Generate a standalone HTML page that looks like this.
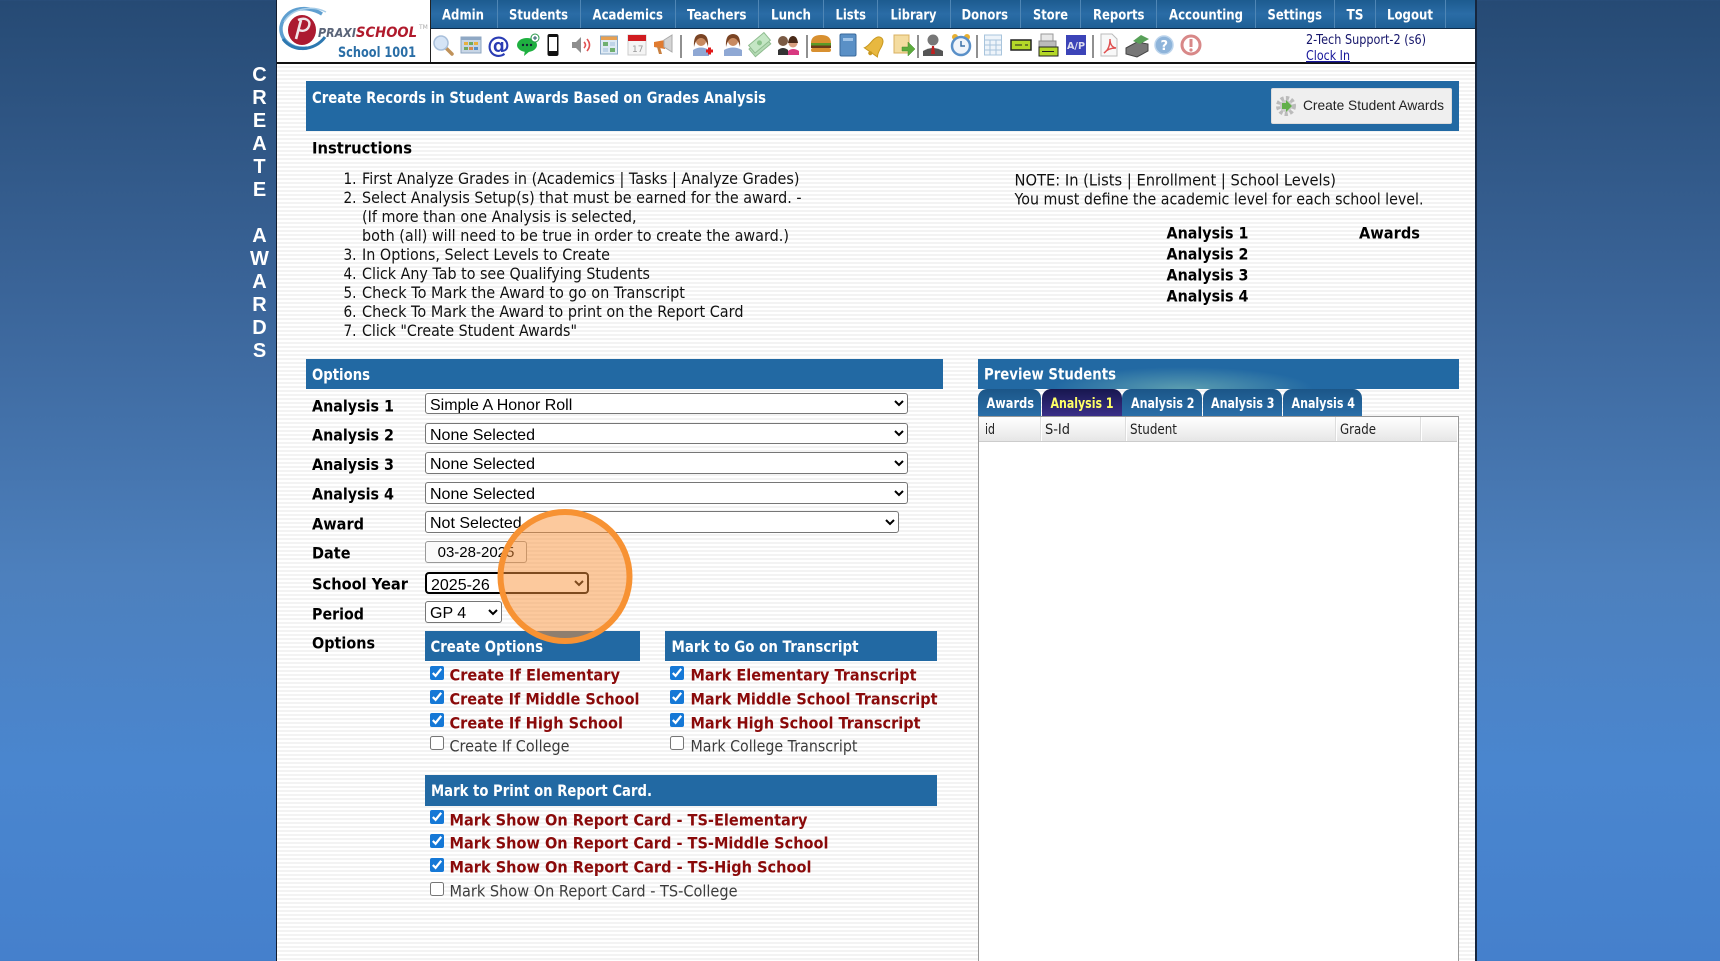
<!DOCTYPE html>
<html lang="en"><head><meta charset="utf-8"><title>Create Student Awards</title>
<style>
html,body{margin:0;padding:0;width:1720px;height:961px;overflow:hidden}
body{position:relative;background:linear-gradient(180deg,#264a74 0%,#3a6498 30%,#4d80bd 60%,#4a86cf 80%,#4580cc 100%);font-family:"Liberation Sans",sans-serif}
.a{position:absolute}
#panel{left:276px;top:0;width:1198px;height:961px;border-left:1px solid #111c2e;border-right:2px solid #16263e;background:repeating-linear-gradient(180deg,#fff 0 2px,#f3f3f3 2px 4px)}
#head{left:277px;top:0;width:1198px;height:62px;background:#fff;border-bottom:2px solid #111}
#nav{left:431px;top:0;width:1044px;height:28px;background:linear-gradient(180deg,#1c5b8f,#2a6ca6 50%,#1e5f95);border-bottom:1px solid #0e2c4a}
#logoSep{left:430px;top:0;width:1px;height:62px;background:#222}
.sep{position:absolute;top:0;width:1px;height:28px;background:#4f86b5}
.bar{position:absolute;background:#2269a3}
.tab{position:absolute;top:389px;height:27px;border-radius:9px 9px 0 0;background:linear-gradient(180deg,#1b5688,#2a6ea8);box-sizing:border-box}
select,input[type=text]{position:absolute;box-sizing:border-box;margin:0;font:16px "Liberation Sans",sans-serif;color:#000;background:#fff;border:1px solid #767676;border-radius:3px;padding:2px 0 0 0}
input[type=text]{padding:1px 0 0 0}
input[type=checkbox]{position:absolute;margin:0;width:14px;height:14px;accent-color:#1578d6}
#btn{left:1271px;top:88px;width:181px;height:36px;background:#efefef;border:1px solid #ddd;border-radius:2px;box-sizing:border-box}
#grid{left:978px;top:416px;width:481px;height:560px;background:#fff;border:1px solid #999;box-sizing:border-box}
#ghead{left:979px;top:417px;width:478px;height:25px;background:linear-gradient(180deg,#fff,#e6e6e6);border-bottom:1px solid #ccc;box-sizing:border-box}
.gs{position:absolute;top:417px;width:1px;height:24px;background:#fff;border-left:1px solid #ddd}
svg{position:absolute;left:0;top:0}
text{font-family:"DejaVu Sans","Liberation Sans",sans-serif}
.n{font-size:16px;fill:#111}
.b{font-size:16px;font-weight:700;fill:#000}
.w{font-size:16px;font-weight:700;fill:#fff}
.nv{font-size:14px;font-weight:700;fill:#fff}
.r{font-size:16px;font-weight:700;fill:#8a0a0a}
.g{font-size:16px;fill:#3c3c3c}
.t{font-size:14px;font-weight:700;fill:#fff}
.h{font-size:14px;fill:#222}
.side{font-family:"Liberation Sans",sans-serif;font-size:20px;font-weight:700;fill:#fff;text-anchor:middle}
</style></head><body>
<div class="a" id="panel"></div>
<div class="a" id="head"></div>
<div class="a" id="nav"></div>
<div class="a" id="logoSep"></div>
<div class="sep" style="left:497px"></div><div class="sep" style="left:580px"></div><div class="sep" style="left:675px"></div><div class="sep" style="left:758px"></div><div class="sep" style="left:823px"></div><div class="sep" style="left:877px"></div><div class="sep" style="left:950px"></div><div class="sep" style="left:1020px"></div><div class="sep" style="left:1080px"></div><div class="sep" style="left:1156px"></div><div class="sep" style="left:1255px"></div><div class="sep" style="left:1334px"></div><div class="sep" style="left:1375px"></div><div class="sep" style="left:1445px"></div>

<div class="bar" style="left:306px;top:81px;width:1153px;height:50px"></div>
<div class="a" id="btn"></div>
<div class="bar" style="left:306px;top:359px;width:637px;height:30px"></div>
<div class="bar" style="left:978px;top:359px;width:481px;height:30px;background:radial-gradient(ellipse 130px 22px at 205px 100%,#5c9eb0 0%,rgba(34,105,163,0) 100%),#2269a3"></div>
<div class="bar" style="left:425px;top:631px;width:215px;height:30px"></div>
<div class="bar" style="left:665px;top:631px;width:272px;height:30px"></div>
<div class="bar" style="left:425px;top:775px;width:512px;height:31px"></div>

<div class="tab" style="left:978px;width:63px"></div>
<div class="tab" style="left:1042px;width:80px;background:linear-gradient(180deg,#17174f,#3a2f88)"></div>
<div class="tab" style="left:1122px;width:80px"></div>
<div class="tab" style="left:1203px;width:79px"></div>
<div class="tab" style="left:1283px;width:79px"></div>
<div class="a" id="grid"></div>
<div class="a" id="ghead"></div>
<div class="gs" style="left:1040px"></div><div class="gs" style="left:1125px"></div><div class="gs" style="left:1335px"></div><div class="gs" style="left:1420px"></div>

<select style="left:425px;top:393px;width:483px;height:21px"><option>Simple A Honor Roll</option></select>
<select style="left:425px;top:423px;width:483px;height:21px"><option>None Selected</option></select>
<select style="left:425px;top:452px;width:483px;height:22px"><option>None Selected</option></select>
<select style="left:425px;top:482px;width:483px;height:22px"><option>None Selected</option></select>
<select style="left:425px;top:511px;width:474px;height:22px"><option>Not Selected</option></select>
<input type="text" value="03-28-2025" style="left:425px;top:541px;width:102px;height:22px;font-size:15px;text-align:center;background:#fafafa;border-color:#999">
<select style="left:425px;top:572px;width:164px;height:22px;border:2px solid #000;border-radius:4px"><option>2025-26</option></select>
<select style="left:425px;top:601px;width:77px;height:22px"><option>GP 4</option></select>

<input type="checkbox" checked style="left:430px;top:666px"><input type="checkbox" checked style="left:430px;top:690px"><input type="checkbox" checked style="left:430px;top:713px"><input type="checkbox" style="left:430px;top:736px">
<input type="checkbox" checked style="left:670px;top:666px"><input type="checkbox" checked style="left:670px;top:690px"><input type="checkbox" checked style="left:670px;top:713px"><input type="checkbox" style="left:670px;top:736px">
<input type="checkbox" checked style="left:430px;top:810px"><input type="checkbox" checked style="left:430px;top:834px"><input type="checkbox" checked style="left:430px;top:858px"><input type="checkbox" style="left:430px;top:882px">

<svg width="1720" height="961" viewBox="0 0 1720 961">
<!-- side letters -->
<text class="side" x="259.5" y="81">C</text><text class="side" x="259.5" y="104">R</text><text class="side" x="259.5" y="127">E</text><text class="side" x="259.5" y="150">A</text><text class="side" x="259.5" y="173">T</text><text class="side" x="259.5" y="196">E</text><text class="side" x="259.5" y="242">A</text><text class="side" x="259.5" y="265">W</text><text class="side" x="259.5" y="288">A</text><text class="side" x="259.5" y="311">R</text><text class="side" x="259.5" y="334">D</text><text class="side" x="259.5" y="357">S</text>

<!-- logo -->
<g fill="none">
<path d="M322 14C306 4 284 8 281 27c-1 14 12 23 26 21" stroke="#5f9fd0" stroke-width="3.5"/>
<path d="M283 39c10 14 32 12 42 -2" stroke="#2d78b0" stroke-width="3"/>
<path d="M326 12C312 5 292 8 284 22" stroke="#a8cde8" stroke-width="1.5"/>
</g>
<ellipse cx="302" cy="30" rx="14" ry="15" fill="#ac1a30"/>
<path d="M298 20c7-3 13 0 11 6s-8 5-10 4" fill="none" stroke="#f0e6ea" stroke-width="2.4"/>
<path d="M301 20l-5 19" stroke="#f0e6ea" stroke-width="2.6"/>
<text x="318" y="37" textLength="38" lengthAdjust="spacingAndGlyphs" style="font-size:12px;font-weight:700;font-style:italic;fill:#5a6478">PRAXI</text>
<text x="356" y="37" textLength="61" lengthAdjust="spacingAndGlyphs" style="font-size:14px;font-weight:700;font-style:italic;fill:#b01a2c">SCHOOL</text>
<text x="419" y="29" style="font-size:6px;fill:#aaa">TM</text>
<text x="338" y="57" textLength="78" lengthAdjust="spacingAndGlyphs" style="font-size:14px;font-weight:700;fill:#2a6ea6">School 1001</text>

<!-- nav -->
<text class="nv" x="442" y="19.5" textLength="42" lengthAdjust="spacingAndGlyphs">Admin</text>
<text class="nv" x="509" y="19.5" textLength="59" lengthAdjust="spacingAndGlyphs">Students</text>
<text class="nv" x="592.5" y="19.5" textLength="70.5" lengthAdjust="spacingAndGlyphs">Academics</text>
<text class="nv" x="687" y="19.5" textLength="59.5" lengthAdjust="spacingAndGlyphs">Teachers</text>
<text class="nv" x="771" y="19.5" textLength="40" lengthAdjust="spacingAndGlyphs">Lunch</text>
<text class="nv" x="835.5" y="19.5" textLength="30.5" lengthAdjust="spacingAndGlyphs">Lists</text>
<text class="nv" x="890.5" y="19.5" textLength="46" lengthAdjust="spacingAndGlyphs">Library</text>
<text class="nv" x="961.5" y="19.5" textLength="46.5" lengthAdjust="spacingAndGlyphs">Donors</text>
<text class="nv" x="1033" y="19.5" textLength="35" lengthAdjust="spacingAndGlyphs">Store</text>
<text class="nv" x="1093" y="19.5" textLength="51.5" lengthAdjust="spacingAndGlyphs">Reports</text>
<text class="nv" x="1169" y="19.5" textLength="74" lengthAdjust="spacingAndGlyphs">Accounting</text>
<text class="nv" x="1267.5" y="19.5" textLength="54.5" lengthAdjust="spacingAndGlyphs">Settings</text>
<text class="nv" x="1346.5" y="19.5" textLength="17" lengthAdjust="spacingAndGlyphs">TS</text>
<text class="nv" x="1387" y="19.5" textLength="46" lengthAdjust="spacingAndGlyphs">Logout</text>

<!-- toolbar icons -->
<g transform="translate(443,45)"><line x1="3" y1="3" x2="9" y2="9" stroke="#c0925a" stroke-width="3.5" stroke-linecap="round"/><circle cx="-2" cy="-2" r="7" fill="#d5e4f6" stroke="#a8bfda" stroke-width="1.5"/></g>
<g transform="translate(471,45)"><rect x="-10" y="-8" width="20" height="16" fill="#c8d6e6" stroke="#8ea6c0"/><rect x="-10" y="-8" width="20" height="3" fill="#8fa8c4"/><rect x="-7" y="-3" width="4" height="3" fill="#e8b040"/><rect x="-2" y="-3" width="4" height="3" fill="#70a860"/><rect x="3" y="-3" width="4" height="3" fill="#e8b040"/><rect x="-7" y="2" width="4" height="3" fill="#70a860"/><rect x="-2" y="2" width="4" height="3" fill="#d88a50"/><rect x="3" y="2" width="4" height="3" fill="#5a90c8"/></g>
<text x="487" y="53" textLength="23" lengthAdjust="spacingAndGlyphs" style="font-size:23px;font-weight:700;fill:#2a3cb4">@</text>
<g transform="translate(528,45)"><ellipse cx="-1" cy="0" rx="10" ry="7" fill="#1fb040"/><path d="M-3 5l-1 6 6-5z" fill="#1fb040"/><circle cx="-5" cy="0" r="1.2" fill="#123"/><circle cx="-1" cy="0" r="1.2" fill="#123"/><circle cx="3" cy="0" r="1.2" fill="#123"/><circle cx="7" cy="-7" r="4" fill="#fff" stroke="#2a9a4a"/><path d="M5 -7h4M7 -9v4" stroke="#256" stroke-width="1"/></g>
<g transform="translate(553,45)"><rect x="-5.5" y="-11" width="11" height="22" rx="2" fill="#111"/><rect x="-4" y="-8" width="8" height="14" fill="#fff"/></g>
<g transform="translate(582,45)"><path d="M-10 -3h4l5-5v16l-5-5h-4z" fill="#8e8e8e"/><path d="M2 -3q3 3 0 6M5 -6q5 6 0 12" fill="none" stroke="#e05050" stroke-width="1.6"/></g>
<g transform="translate(609,45)"><rect x="-8.5" y="-9" width="17" height="18" fill="#dfeaf4" stroke="#8aa8c6"/><rect x="-8" y="-8.5" width="16" height="3.5" fill="#e8a050"/><rect x="-6" y="-3" width="5" height="4" fill="#70b070"/><rect x="1" y="-3" width="5" height="4" fill="#c0d4e8"/><rect x="-6" y="3" width="5" height="4" fill="#c0d4e8"/><rect x="1" y="3" width="5" height="4" fill="#70b070"/></g>
<g transform="translate(637,45)"><rect x="-9" y="-10" width="18" height="20" fill="#f4f4f4" stroke="#ccc"/><rect x="-9" y="-10" width="18" height="6" fill="#d01c20"/><text x="-5" y="7" style="font-size:9px;fill:#999">17</text></g>
<g transform="translate(663,45)"><path d="M-9 -3l11 -2v9l-11 -2z" fill="#e07b30"/><path d="M1 -5l8 -5v17l-8 -5z" fill="#d5d5d5" stroke="#aaa"/><path d="M-6 2l2 7h3l-2-7z" fill="#c88040"/></g>
<line x1="681" y1="35" x2="681" y2="58" stroke="#222"/>
<g transform="translate(702,45)"><path d="M-9 11v-6q8-5 16 0v6z" fill="#8fa8d4"/><circle cx="-1" cy="-4" r="5" fill="#c88a60"/><path d="M-8 2q-1-13 7-13t7 13q-2-9-7-9t-7 9z" fill="#7a4424"/><path d="M4 6h7M7.5 2.500v7" stroke="#e01818" stroke-width="3"/></g>
<g transform="translate(733,45)"><path d="M-9 11v-6q9-5 18 0v6z" fill="#8fa8d4"/><circle cx="0" cy="-4" r="5" fill="#c88a60"/><path d="M-7 2q-1-13 7-13t7 13q-2-9-7-9t-7 9z" fill="#7a4424"/></g>
<g transform="translate(760,45) rotate(-40)"><rect x="-11" y="-4" width="20" height="10" fill="#b6dcb6" stroke="#8fbc8f"/><rect x="-9" y="-7" width="20" height="10" fill="#c4e6c4" stroke="#8fbc8f"/><circle cx="1" cy="-2" r="2.5" fill="#8cc48c"/></g>
<g transform="translate(789,45)"><path d="M-11 10v-5q5-4 10 0v5z" fill="#333"/><circle cx="-6" cy="-4" r="5" fill="#7a5a44"/><path d="M-1 10v-4q5-4 11 0v4z" fill="#d83880"/><circle cx="4" cy="-2" r="4.500" fill="#d8a080"/><path d="M-1 -2q1-7 5-7t5 7z" fill="#4a2a18"/></g>
<line x1="807" y1="35" x2="807" y2="58" stroke="#222"/>
<g transform="translate(821,45)"><path d="M-10 -2q0-8 10-8t10 8z" fill="#d89030"/><rect x="-10" y="-2" width="20" height="2.500" fill="#5a9a28"/><rect x="-10" y="0.500" width="20" height="2.500" fill="#6a3a18"/><rect x="-10" y="3" width="20" height="4" rx="2" fill="#d89030"/></g>
<g transform="translate(848,45)"><rect x="-8" y="-11" width="16" height="22" rx="1.500" fill="#5a90c6" stroke="#3a6a9c"/><rect x="-5" y="-7" width="10" height="3" fill="#a0c4e8"/></g>
<g transform="translate(876,45) rotate(35)"><path d="M-8 9q2-3 2.500-10q1-8 5.500-8t5.500 8q.5 7 2.500 10z" fill="#e8b840" stroke="#c89820"/><circle cx="0" cy="10" r="2" fill="#c89820"/></g>
<g transform="translate(904,45)"><rect x="-10" y="-10" width="15" height="18" fill="#f4dca0" stroke="#d8b060"/><path d="M-2 2h6v-5l7 7-7 7v-5h-6z" fill="#5cab3c" stroke="#448a2c" stroke-width=".5"/></g>
<line x1="918" y1="35" x2="918" y2="58" stroke="#222"/>
<g transform="translate(933,45)"><path d="M-10 11v-5q10-6 20 0v5z" fill="#555"/><circle cx="0" cy="-5" r="5.500" fill="#777"/><path d="M-1 1h2l1 8h-4z" fill="#c02020"/></g>
<g transform="translate(961,45)"><circle cx="-6" cy="-8" r="3" fill="#e8b030"/><circle cx="6" cy="-8" r="3" fill="#e8b030"/><circle cx="0" cy="1" r="9" fill="#f0f4fa" stroke="#5a90c8" stroke-width="2.500"/><path d="M0 -4v5h4" stroke="#3a70a8" stroke-width="1.500" fill="none"/></g>
<line x1="977" y1="35" x2="977" y2="58" stroke="#222"/>
<g transform="translate(993,45)" stroke="#a8c4dc" fill="#eef4fa"><rect x="-8.500" y="-10" width="17" height="20"/><path d="M-8.500 -5h17M-8.500 0h17M-8.500 5h17M-3 -5v15M3 -5v15" fill="none"/></g>
<g transform="translate(1021,45)"><rect x="-10" y="-5" width="20" height="10" fill="#b4d828" stroke="#222" stroke-width="1.500"/><path d="M-6 0h7M4 0h3" stroke="#222"/></g>
<g transform="translate(1048,45)"><rect x="-7" y="-11" width="12" height="8" fill="#e8e8e8" stroke="#999"/><rect x="-9" y="-4" width="17" height="8" fill="#bbb" stroke="#888"/><rect x="-9" y="2" width="19" height="9" fill="#b4d828" stroke="#222"/><path d="M-6 6.500h12" stroke="#222"/></g>
<g transform="translate(1076,45)"><rect x="-10" y="-10" width="20" height="20" fill="#3c44b8"/><text x="-9" y="4" textLength="18" lengthAdjust="spacingAndGlyphs" style="font-size:10px;font-weight:700;fill:#dde">A/P</text></g>
<line x1="1093" y1="35" x2="1093" y2="58" stroke="#222"/>
<g transform="translate(1109,45)"><path d="M-8 -11h11l5 5v17h-16z" fill="#f8f8f8" stroke="#bbb"/><path d="M-5 8q6-4 6-14q0 8 6 9q-8 0-12 5z" fill="none" stroke="#e05050" stroke-width="1.400"/></g>
<g transform="translate(1137,45)"><path d="M-11 3l11-6 11 2v7l-11 6-11-3z" fill="#777" stroke="#444"/><path d="M-4 -4l8-6 8 4-9 5z" fill="#58a058"/></g>
<g transform="translate(1164,45)"><circle r="9" fill="#8eb4da" stroke="#bcd4ec" stroke-width="1.500"/><text x="-3.500" y="5" style="font-size:13px;font-weight:700;fill:#fff">?</text></g>
<g transform="translate(1191,45)"><circle r="9" fill="#fff" stroke="#d88888" stroke-width="3"/><rect x="-1.500" y="-6" width="3" height="8" fill="#d88888"/><circle cy="5" r="1.600" fill="#d88888"/></g>

<text x="1306" y="44" textLength="120" lengthAdjust="spacingAndGlyphs" style="font-size:13px;fill:#15156a">2-Tech Support-2 (s6)</text>
<text x="1306" y="60" textLength="44" lengthAdjust="spacingAndGlyphs" style="font-size:13px;fill:#15159a;text-decoration:underline">Clock In</text>

<text class="w" x="312" y="103" textLength="454" lengthAdjust="spacingAndGlyphs">Create Records in Student Awards Based on Grades Analysis</text>
<g transform="translate(1286,106)"><circle r="7.500" fill="none" stroke="#bbb" stroke-width="5" stroke-dasharray="3 2"/><circle r="6" fill="#ccc"/><path d="M-4 -3h4v-3l6 6-6 6v-3h-4z" fill="#62b04a"/></g>
<text x="1303" y="110" textLength="141" lengthAdjust="spacingAndGlyphs" style="font-family:'Liberation Sans',sans-serif;font-size:14px;fill:#222">Create Student Awards</text>

<text class="b" x="312" y="153.500" textLength="100" lengthAdjust="spacingAndGlyphs">Instructions</text>
<text class="n" x="343.500" y="184" textLength="13" lengthAdjust="spacingAndGlyphs">1.</text><text class="n" x="362" y="184" textLength="437.500" lengthAdjust="spacingAndGlyphs">First Analyze Grades in (Academics | Tasks | Analyze Grades)</text>
<text class="n" x="343.500" y="203" textLength="13" lengthAdjust="spacingAndGlyphs">2.</text><text class="n" x="362" y="203" textLength="439.500" lengthAdjust="spacingAndGlyphs">Select Analysis Setup(s) that must be earned for the award. -</text>
<text class="n" x="362" y="222" textLength="274.500" lengthAdjust="spacingAndGlyphs">(If more than one Analysis is selected,</text>
<text class="n" x="362" y="241" textLength="427" lengthAdjust="spacingAndGlyphs">both (all) will need to be true in order to create the award.)</text>
<text class="n" x="343.500" y="260" textLength="13" lengthAdjust="spacingAndGlyphs">3.</text><text class="n" x="362" y="260" textLength="248" lengthAdjust="spacingAndGlyphs">In Options, Select Levels to Create</text>
<text class="n" x="343.500" y="279" textLength="13" lengthAdjust="spacingAndGlyphs">4.</text><text class="n" x="362" y="279" textLength="288" lengthAdjust="spacingAndGlyphs">Click Any Tab to see Qualifying Students</text>
<text class="n" x="343.500" y="298" textLength="13" lengthAdjust="spacingAndGlyphs">5.</text><text class="n" x="362" y="298" textLength="323" lengthAdjust="spacingAndGlyphs">Check To Mark the Award to go on Transcript</text>
<text class="n" x="343.500" y="317" textLength="13" lengthAdjust="spacingAndGlyphs">6.</text><text class="n" x="362" y="317" textLength="381.500" lengthAdjust="spacingAndGlyphs">Check To Mark the Award to print on the Report Card</text>
<text class="n" x="343.500" y="336" textLength="13" lengthAdjust="spacingAndGlyphs">7.</text><text class="n" x="362" y="336" textLength="215" lengthAdjust="spacingAndGlyphs">Click "Create Student Awards"</text>

<text class="n" x="1014.500" y="185.500" textLength="321.500" lengthAdjust="spacingAndGlyphs">NOTE: In (Lists | Enrollment | School Levels)</text>
<text class="n" x="1014.500" y="204.500" textLength="409" lengthAdjust="spacingAndGlyphs">You must define the academic level for each school level.</text>
<text class="b" x="1166.500" y="238.500" textLength="82" lengthAdjust="spacingAndGlyphs">Analysis 1</text>
<text class="b" x="1166.500" y="259.500" textLength="82" lengthAdjust="spacingAndGlyphs">Analysis 2</text>
<text class="b" x="1166.500" y="280.500" textLength="82" lengthAdjust="spacingAndGlyphs">Analysis 3</text>
<text class="b" x="1166.500" y="301.500" textLength="82" lengthAdjust="spacingAndGlyphs">Analysis 4</text>
<text class="b" x="1359" y="238.500" textLength="61" lengthAdjust="spacingAndGlyphs">Awards</text>

<text class="w" x="312" y="380" textLength="58" lengthAdjust="spacingAndGlyphs">Options</text>
<text class="b" x="312" y="411.500" textLength="82" lengthAdjust="spacingAndGlyphs">Analysis 1</text>
<text class="b" x="312" y="440.500" textLength="82" lengthAdjust="spacingAndGlyphs">Analysis 2</text>
<text class="b" x="312" y="470" textLength="82" lengthAdjust="spacingAndGlyphs">Analysis 3</text>
<text class="b" x="312" y="499.500" textLength="82" lengthAdjust="spacingAndGlyphs">Analysis 4</text>
<text class="b" x="312" y="529.500" textLength="52" lengthAdjust="spacingAndGlyphs">Award</text>
<text class="b" x="312" y="558.500" textLength="38.500" lengthAdjust="spacingAndGlyphs">Date</text>
<text class="b" x="312" y="589.500" textLength="96" lengthAdjust="spacingAndGlyphs">School Year</text>
<text class="b" x="312" y="619.500" textLength="52" lengthAdjust="spacingAndGlyphs">Period</text>
<text class="b" x="312" y="648.500" textLength="63" lengthAdjust="spacingAndGlyphs">Options</text>

<text class="w" x="430.500" y="652" textLength="112.500" lengthAdjust="spacingAndGlyphs">Create Options</text>
<text class="w" x="671.500" y="652" textLength="187" lengthAdjust="spacingAndGlyphs">Mark to Go on Transcript</text>
<text class="r" x="449.500" y="680.500" textLength="170.500" lengthAdjust="spacingAndGlyphs">Create If Elementary</text>
<text class="r" x="449.500" y="704.500" textLength="190" lengthAdjust="spacingAndGlyphs">Create If Middle School</text>
<text class="r" x="449.500" y="728.500" textLength="173.500" lengthAdjust="spacingAndGlyphs">Create If High School</text>
<text class="g" x="449.500" y="751.500" textLength="120" lengthAdjust="spacingAndGlyphs">Create If College</text>
<text class="r" x="690.500" y="680.500" textLength="226" lengthAdjust="spacingAndGlyphs">Mark Elementary Transcript</text>
<text class="r" x="690.500" y="704.500" textLength="247" lengthAdjust="spacingAndGlyphs">Mark Middle School Transcript</text>
<text class="r" x="690.500" y="728.500" textLength="230" lengthAdjust="spacingAndGlyphs">Mark High School Transcript</text>
<text class="g" x="690.500" y="751.500" textLength="167" lengthAdjust="spacingAndGlyphs">Mark College Transcript</text>
<text class="w" x="431" y="796" textLength="221" lengthAdjust="spacingAndGlyphs">Mark to Print on Report Card.</text>
<text class="r" x="449.500" y="825.500" textLength="358" lengthAdjust="spacingAndGlyphs">Mark Show On Report Card - TS-Elementary</text>
<text class="r" x="449.500" y="848.500" textLength="379" lengthAdjust="spacingAndGlyphs">Mark Show On Report Card - TS-Middle School</text>
<text class="r" x="449.500" y="872.500" textLength="362" lengthAdjust="spacingAndGlyphs">Mark Show On Report Card - TS-High School</text>
<text class="g" x="449.500" y="896.500" textLength="288" lengthAdjust="spacingAndGlyphs">Mark Show On Report Card - TS-College</text>

<text class="w" x="984" y="379.500" textLength="132" lengthAdjust="spacingAndGlyphs">Preview Students</text>
<text class="t" x="986.500" y="408" textLength="47.500" lengthAdjust="spacingAndGlyphs">Awards</text>
<text class="t" x="1050.500" y="408" textLength="63" lengthAdjust="spacingAndGlyphs" style="fill:#ffff66">Analysis 1</text>
<text class="t" x="1131" y="408" textLength="63.500" lengthAdjust="spacingAndGlyphs">Analysis 2</text>
<text class="t" x="1211" y="408" textLength="63.500" lengthAdjust="spacingAndGlyphs">Analysis 3</text>
<text class="t" x="1291.500" y="408" textLength="63.500" lengthAdjust="spacingAndGlyphs">Analysis 4</text>
<text class="h" x="985" y="434" textLength="10" lengthAdjust="spacingAndGlyphs">id</text>
<text class="h" x="1045" y="434" textLength="25" lengthAdjust="spacingAndGlyphs">S-Id</text>
<text class="h" x="1130" y="434" textLength="47" lengthAdjust="spacingAndGlyphs">Student</text>
<text class="h" x="1340" y="434" textLength="36" lengthAdjust="spacingAndGlyphs">Grade</text>

<!-- orange highlight -->
<circle cx="565" cy="576.500" r="64.500" fill="rgba(249,148,60,.5)" stroke="#f79233" stroke-width="6"/>
</svg>
</body></html>
